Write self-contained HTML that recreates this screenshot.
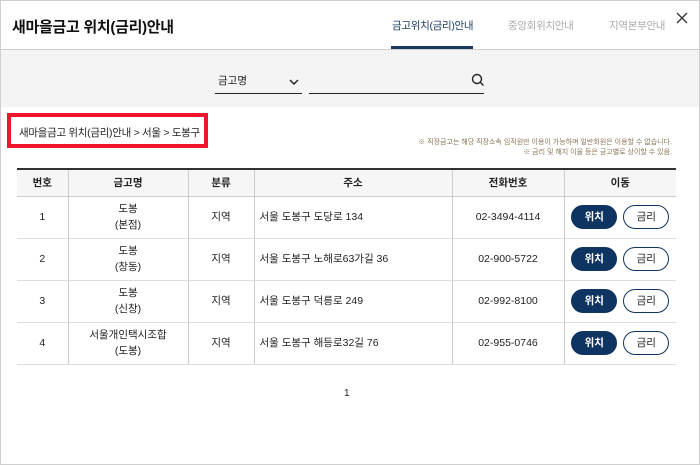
<!DOCTYPE html>
<html><head><meta charset="utf-8"><style>
*{margin:0;padding:0;box-sizing:border-box}
body{width:700px;height:465px;overflow:hidden;background:#fff;font-family:"Liberation Sans","Noto Sans CJK KR",sans-serif;color:#222;position:relative}
.frame{position:absolute;left:0;top:0;width:700px;height:465px;border:1px solid #cfcfcf}
.hdr{position:absolute;left:1px;top:1px;width:698px;height:49px;border-bottom:1px solid #cfcfcf;background:#fff}
.title{position:absolute;left:11px;top:15px;font-size:15px;font-weight:bold;color:#111;letter-spacing:-0.3px}
.tab{position:absolute;top:17px;font-size:10.5px;color:#aaa;letter-spacing:-0.3px}
.tab.on{color:#1b3a5e}
.ul{position:absolute;left:390px;top:45px;width:82px;height:3px;background:#1b3a5e}
.x{position:absolute;left:673px;top:9px;font-size:16px;color:#333;font-weight:normal}
.search{position:absolute;left:1px;top:50px;width:698px;height:57px;background:#f4f4f4}
.sel{position:absolute;left:214px;top:20px;width:87px;height:24px;border-bottom:1.5px solid #222;font-size:10.5px;padding:3px 0 0 3px}
.inp{position:absolute;left:308px;top:20px;width:175px;height:24px;border-bottom:1.5px solid #222}
.red{position:absolute;left:7px;top:113px;width:201px;height:35px;border:4px solid #f0142d;font-size:10.5px;padding:8px 0 0 8px;white-space:nowrap;letter-spacing:-0.3px}
.note{position:absolute;right:28px;top:138px;font-size:7px;color:#8a7555;text-align:right;line-height:10px}
table{position:absolute;left:17px;top:168px;border-collapse:collapse;font-size:10.5px;border-top:2px solid #333}
th{background:#f6f6f6;height:27px;font-weight:bold;font-size:10.5px;border-bottom:1px solid #ccc}
td{height:42px;border-bottom:1px solid #ddd;text-align:center;line-height:16px}
th+th,td+td{border-left:1px solid #ccc}
td.a{text-align:left;padding-left:5px}
.b{display:inline-block;width:46px;height:24px;border-radius:12px;font-size:10.5px;line-height:22px;vertical-align:middle}
.b1{background:#0e3461;color:#fff;font-weight:bold;border:1px solid #0e3461}
.b2{border:1px solid #0e3461;color:#222;margin-left:6px}
.pg{position:absolute;left:344px;top:388px;font-size:10px}
</style></head><body>
<div class="frame"></div>
<div class="hdr">
<div class="title">새마을금고 위치(금리)안내</div>
<div class="tab on" style="left:391px">금고위치(금리)안내</div>
<div class="tab" style="left:507px">중앙회위치안내</div>
<div class="tab" style="left:608px">지역본부안내</div>
<div class="ul"></div>
<svg class="x" width="12" height="12" style="position:absolute;left:675px;top:11px"><path d="M1 1l10 10M11 1L1 11" stroke="#333" stroke-width="1.3"/></svg>
</div>
<div class="search">
<div class="sel">금고명<svg style="position:absolute;left:74px;top:8px" width="10" height="8"><path d="M1 2l4 4 4-4" stroke="#222" stroke-width="1.5" fill="none"/></svg></div>
<div class="inp"><svg style="position:absolute;left:162px;top:3px" width="14" height="14"><circle cx="6" cy="6" r="4.5" stroke="#222" stroke-width="1.4" fill="none"/><path d="M9.3 9.3l3.2 3.2" stroke="#222" stroke-width="1.4"/></svg></div>
</div>
<div class="red">새마을금고 위치(금리)안내 &gt; 서울 &gt; 도봉구</div>
<div class="note">※ 직장금고는 해당 직장소속 임직원만 이용이 가능하며 일반회원은 이용할 수 없습니다.<br>※ 금리 및 해지 이율 등은 금고별로 상이할 수 있음.</div>
<table>
<tr><th style="width:51px">번호</th><th style="width:120px">금고명</th><th style="width:66px">분류</th><th style="width:198px">주소</th><th style="width:112px">전화번호</th><th style="width:112px">이동</th></tr>
<tr><td>1</td><td>도봉<br>(본점)</td><td>지역</td><td class="a">서울 도봉구 도당로 134</td><td>02-3494-4114</td><td><span class="b b1">위치</span><span class="b b2">금리</span></td></tr>
<tr><td>2</td><td>도봉<br>(창동)</td><td>지역</td><td class="a">서울 도봉구 노해로63가길 36</td><td>02-900-5722</td><td><span class="b b1">위치</span><span class="b b2">금리</span></td></tr>
<tr><td>3</td><td>도봉<br>(신창)</td><td>지역</td><td class="a">서울 도봉구 덕릉로 249</td><td>02-992-8100</td><td><span class="b b1">위치</span><span class="b b2">금리</span></td></tr>
<tr><td>4</td><td>서울개인택시조합<br>(도봉)</td><td>지역</td><td class="a">서울 도봉구 해등로32길 76</td><td>02-955-0746</td><td><span class="b b1">위치</span><span class="b b2">금리</span></td></tr>
</table>
<div class="pg">1</div>
</body></html>
